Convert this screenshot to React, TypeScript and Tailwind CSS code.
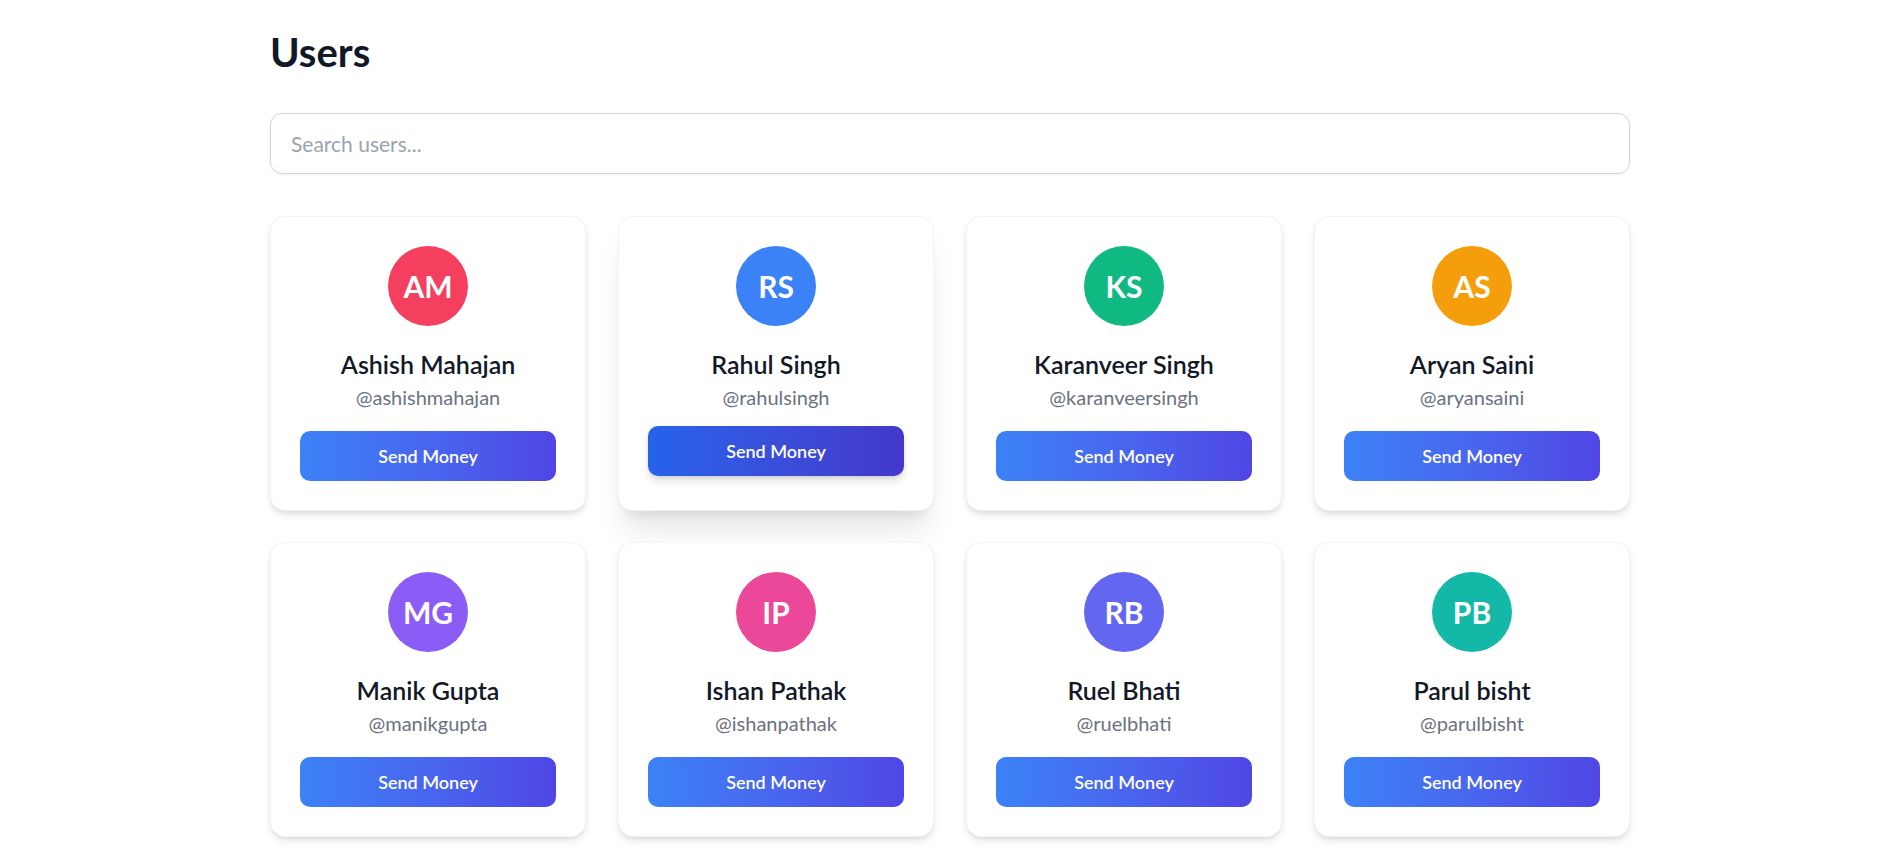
import type { FC } from "react";

interface User {
  name: string;
  username: string;
  initials: string;
  color: string;
}

const users: User[] = [
  { name: "Ashish Mahajan", username: "ashishmahajan", initials: "AM", color: "bg-[#f43f5e]" },
  { name: "Rahul Singh", username: "rahulsingh", initials: "RS", color: "bg-[#3b82f6]" },
  { name: "Karanveer Singh", username: "karanveersingh", initials: "KS", color: "bg-[#10b981]" },
  { name: "Aryan Saini", username: "aryansaini", initials: "AS", color: "bg-[#f59e0b]" },
  { name: "Manik Gupta", username: "manikgupta", initials: "MG", color: "bg-[#8b5cf6]" },
  { name: "Ishan Pathak", username: "ishanpathak", initials: "IP", color: "bg-[#ec4899]" },
  { name: "Ruel Bhati", username: "ruelbhati", initials: "RB", color: "bg-[#6366f1]" },
  { name: "Parul bisht", username: "parulbisht", initials: "PB", color: "bg-[#14b8a6]" },
];

const UserCard: FC<{ user: User; active?: boolean }> = ({ user, active }) => {
  return (
    <div
      className={`bg-white border border-[#f3f4f6] rounded-[15px] p-[29px] flex flex-col items-center ${
        active
          ? "shadow-[0_25px_31px_-6px_rgba(0,0,0,0.1),0_10px_12px_-8px_rgba(0,0,0,0.1)]"
          : "shadow-[0_5px_8px_-1px_rgba(0,0,0,0.1),0_2px_5px_-2px_rgba(0,0,0,0.1)]"
      }`}
    >
      <div
        className={`w-20 h-20 rounded-full ${user.color} flex items-center justify-center text-white text-[30px] font-bold leading-none`}
      >
        {user.initials}
      </div>
      <h3 className="mt-[21px] text-[25px] leading-[35px] font-semibold text-[#111827]">
        {user.name}
      </h3>
      <p className="text-[20px] leading-[30px] text-[#6b7280]">@{user.username}</p>
      <button
        className={`w-full h-[50px] rounded-[10px] text-white text-[18px] font-semibold flex items-center justify-center bg-gradient-to-r ${
          active
            ? "mt-[14px] mb-[5px] from-[#2563eb] to-[#4338ca] shadow-[0_5px_8px_-1px_rgba(0,0,0,0.15),0_2px_5px_-2px_rgba(0,0,0,0.1)]"
            : "mt-[19px] from-[#3b82f6] to-[#4f46e5]"
        }`}
      >
        Send Money
      </button>
    </div>
  );
};

const App: FC = () => {
  return (
    <div className="min-h-screen bg-white font-['Lato',sans-serif]">
      <div className="max-w-[1360px] mx-auto pt-[32px] pb-10">
        <h1 className="text-[40px] leading-[40px] font-bold text-[#111827]">Users</h1>
        <input
          type="text"
          placeholder="Search users..."
          className="mt-[41px] w-full h-[61px] px-5 border border-[#d1d5db] rounded-[12px] text-[21px] text-[#111827] placeholder:text-[#9ca3af] shadow-[0_1px_3px_rgba(0,0,0,0.06)] outline-none"
        />
        <div className="mt-[42px] grid grid-cols-4 gap-x-8 gap-y-[31px]">
          {users.map((u, i) => (
            <UserCard key={u.username} user={u} active={i === 1} />
          ))}
        </div>
      </div>
    </div>
  );
};

export default App;
